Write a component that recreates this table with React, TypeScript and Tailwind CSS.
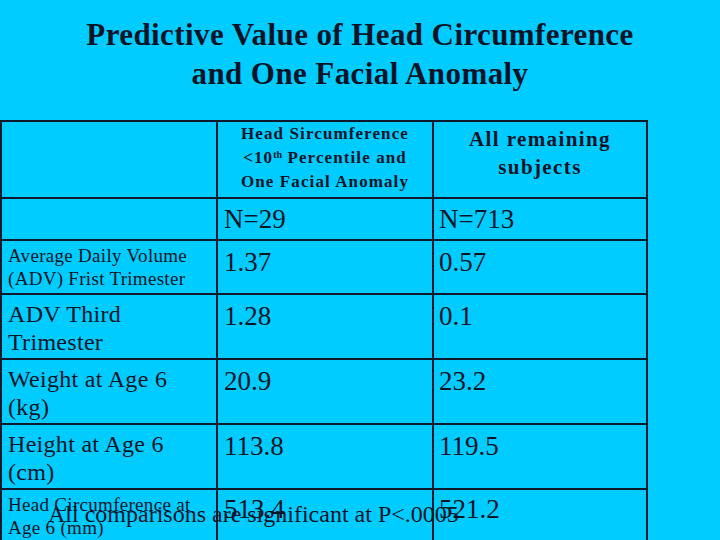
const rows = [
  { label: ["Average Daily Volume", "(ADV) Frist Trimester"], small: true, a: "1.37", b: "0.57" },
  { label: ["ADV Third", "Trimester"], small: false, a: "1.28", b: "0.1" },
  { label: ["Weight at Age 6", "(kg)"], small: false, a: "20.9", b: "23.2" },
  { label: ["Height at Age 6", "(cm)"], small: false, a: "113.8", b: "119.5" },
  { label: ["Head Circumference at", "Age 6 (mm)"], small: true, a: "513.4", b: "521.2", last: true },
]

export default function App() {
  return (
    <div className="relative w-[720px] h-[540px] overflow-hidden bg-[#00ccff] text-[#0a1428] font-['Liberation_Serif','Times_New_Roman',serif]">
      <h1 className="pt-[15px] text-center text-[31px] leading-[39px] font-bold tracking-[0.4px]">
        Predictive Value of Head Circumference
        <br />
        and One Facial Anomaly
      </h1>

      <div className="mt-[27px] grid grid-cols-[216px_216px_214px] grid-rows-[77px_42px_54px_65px_65px_65px_65px] w-[648px] border-t-2 border-l-2 border-[#0f1a2e]">
        {/* header */}
        <div className="border-r-2 border-b-2 border-[#0f1a2e]"></div>
        <div className="border-r-2 border-b-2 border-[#0f1a2e] text-center text-[17px] leading-[24px] font-bold tracking-[1.1px]">
          Head Sircumference
          <br />
          &lt;10<sup className="text-[10px] tracking-normal">th</sup> Percentile and
          <br />
          One Facial Anomaly
        </div>
        <div className="border-r-2 border-b-2 border-[#0f1a2e] pt-[3px] text-center text-[21px] leading-[28px] font-bold tracking-[1.4px]">
          All remaining
          <br />
          subjects
        </div>

        {/* N row */}
        <div className="border-r-2 border-b-2 border-[#0f1a2e]"></div>
        <div className="border-r-2 border-b-2 border-[#0f1a2e] pt-[5px] pl-[6px] text-[27px] leading-[30px]">N=29</div>
        <div className="border-r-2 border-b-2 border-[#0f1a2e] pt-[5px] pl-[5px] text-[27px] leading-[30px]">N=713</div>

        {rows.map((r, i) => (
          <div key={i} className="contents">
            <div
              className={
                r.small
                  ? "border-r-2 border-b-2 border-[#0f1a2e] pl-[6px] pt-[3px] text-[19px] leading-[23px] tracking-[0.3px]"
                  : "border-r-2 border-b-2 border-[#0f1a2e] pl-[6px] pt-[5px] text-[24px] leading-[28px] tracking-[0.3px]"
              }
            >
              {r.label[0]}
              <br />
              {r.label[1]}
            </div>
            <div className={r.last ? "border-r-2 border-b-2 border-[#0f1a2e] pl-[6px] pt-[4px] text-[27px] leading-[30px]" : "border-r-2 border-b-2 border-[#0f1a2e] pl-[6px] pt-[6px] text-[27px] leading-[30px]"}>
              {r.a}
            </div>
            <div className={r.last ? "border-r-2 border-b-2 border-[#0f1a2e] pl-[5px] pt-[4px] text-[27px] leading-[30px]" : "border-r-2 border-b-2 border-[#0f1a2e] pl-[5px] pt-[6px] text-[27px] leading-[30px]"}>
              {r.b}
            </div>
          </div>
        ))}
      </div>

      <p className="absolute left-[48px] top-[502px] text-[24px] leading-[24px] whitespace-nowrap">
        All comparisons are significant at P&lt;.0005
      </p>
    </div>
  )
}
